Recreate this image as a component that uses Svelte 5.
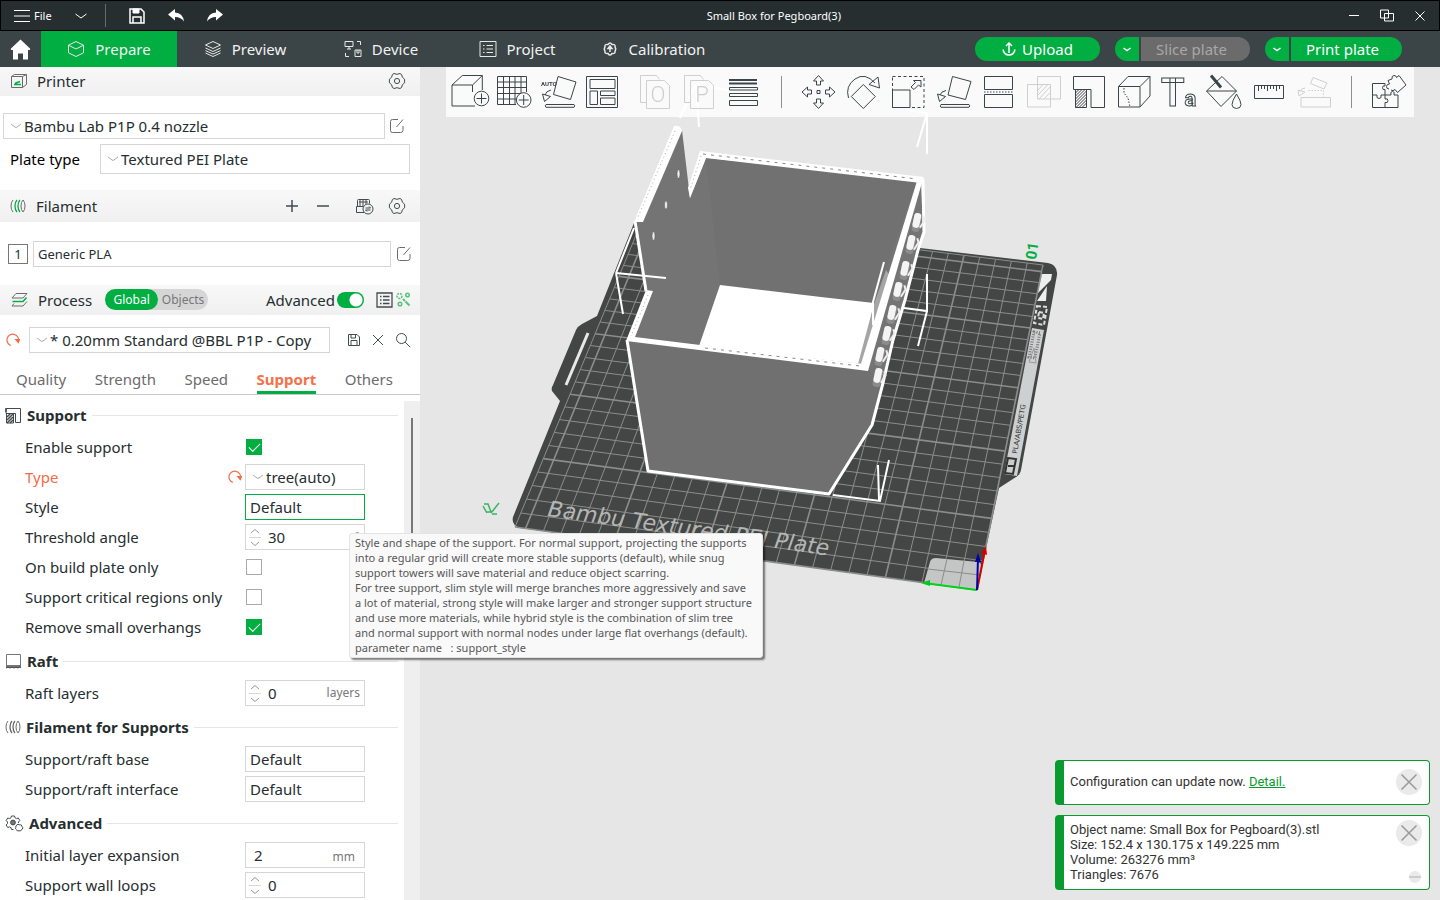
<script>
  const tabs = ['Prepare', 'Preview', 'Device', 'Project', 'Calibration'];
  let activeTab = $state('Prepare');

  const paramTabs = ['Quality', 'Strength', 'Speed', 'Support', 'Others'];
  let activeParam = $state('Support');

  const sections = [
    {
      title: 'Support',
      icon: 'support',
      rows: [
        { label: 'Enable support', kind: 'check', value: true },
        { label: 'Type', kind: 'combo', value: 'tree(auto)', changed: true },
        { label: 'Style', kind: 'plain', value: 'Default', focused: true },
        { label: 'Threshold angle', kind: 'spin', value: '30', unit: '°' },
        { label: 'On build plate only', kind: 'check', value: false },
        { label: 'Support critical regions only', kind: 'check', value: false },
        { label: 'Remove small overhangs', kind: 'check', value: true }
      ]
    },
    {
      title: 'Raft',
      icon: 'raft',
      rows: [{ label: 'Raft layers', kind: 'spin', value: '0', unit: 'layers' }]
    },
    {
      title: 'Filament for Supports',
      icon: 'filament',
      rows: [
        { label: 'Support/raft base', kind: 'plain', value: 'Default' },
        { label: 'Support/raft interface', kind: 'plain', value: 'Default' }
      ]
    },
    {
      title: 'Advanced',
      icon: 'gears',
      rows: [
        { label: 'Initial layer expansion', kind: 'text', value: '2', unit: 'mm' },
        { label: 'Support wall loops', kind: 'spin', value: '0' }
      ]
    }
  ];
  const idOf = (label) => label.toLowerCase().replace(/[^a-z]+/g, '-');

  const fileTools = ['Add', 'Add plate', 'Auto orient', 'Arrange'];
  const splitTools = ['To objects', 'To parts', 'Variable layer height'];
  const editTools = ['Move', 'Rotate', 'Scale', 'Lay on face', 'Cut', 'Boolean', 'Support painting', 'Seam painting', 'Text', 'Color painting', 'Measure', 'Assemble'];

  // Perspective projection of the 256 mm build plate onto the canvas.
  const plate = [[977, 590], [1043, 265], [644, 216], [515, 527]];
  const SIZE = 256;
  function project(x, y) {
    const [[x0, y0], [x1, y1], [x2, y2], [x3, y3]] = plate;
    const u = x / SIZE, v = y / SIZE;
    const dx1 = x1 - x2, dx2 = x3 - x2, sx = x0 - x1 + x2 - x3;
    const dy1 = y1 - y2, dy2 = y3 - y2, sy = y0 - y1 + y2 - y3;
    const det = dx1 * dy2 - dx2 * dy1;
    const g = (sx * dy2 - dx2 * sy) / det;
    const h = (dx1 * sy - sx * dy1) / det;
    const w = g * u + h * v + 1;
    return [
      ((x1 - x0 + g * x1) * u + (x3 - x0 + h * x3) * v + x0) / w,
      ((y1 - y0 + g * y1) * u + (y3 - y0 + h * y3) * v + y0) / w
    ].map((n) => n.toFixed(1));
  }
  const segment = (a, b) => `M${project(...a)}L${project(...b)}`;
  const both = (n) => segment([n, 0], [n, SIZE]) + segment([0, n], [SIZE, n]);
  const steps = Array.from({ length: 26 }, (_, i) => i * 10);
  const minorGrid = steps.filter((n) => n % 50).concat(SIZE).map(both).join('');
  const majorGrid = steps.filter((n) => n % 50 === 0).map(both).join('');

  const pegs = [[917, 222], [911, 244], [905, 270], [898, 291], [892, 314], [887, 335], [880, 356], [878, 377]];
</script>

{#snippet chevron()}
  <svg class="chev" width="12" height="12" viewBox="0 0 12 12"><path d="M1 4l4 3q1 .7 2 0l4-3" /></svg>
{/snippet}

{#snippet gear()}
  <svg class="ic" width="18" height="18" viewBox="0 0 18 18"><path d="M6 1.5q3 1.6 6 0l1.6 1q0 3 3 4.700v3.600q-3 1.700-3 4.700l-1.600 1q-3-1.600-6 0l-1.600-1q0-3-3-4.700V7.200q3-1.700 3-4.700z" /><circle cx="9" cy="9" r="2.600" /></svg>
{/snippet}

{#snippet edit()}
  <svg class="ic soft" width="16" height="16" viewBox="0 0 16 16"><path d="M9 1.500H3.500q-2 0-2 2v9q0 2 2 2h8q2.500 0 2.500-2V8M7.500 9L14 1.500" /></svg>
{/snippet}

{#snippet reset()}
  <svg class="reset" width="14" height="14" viewBox="0 0 14 14"><path d="M5 12.500A5.800 5.800 0 1 1 12.500 8" /><path d="M9.800 6.500h3.700l-1.200 3z" class="fill" /></svg>
{/snippet}

{#snippet spool(color)}
  <svg class="ic soft" width="16" height="14" viewBox="0 0 16 14"><path d="M3 1Q1 3 1 7t2 6M13 1q-2 2-2 6t2 6q2-2 2-6t-2-6" /><path d="M7 1Q5 3 5 7t2 6M10 1Q8 3 8 7t2 6" style:stroke={color} stroke-width="1.300" /></svg>
{/snippet}

{#snippet sectionIcon(name)}
  {#if name === 'support'}
    <svg class="ic" width="17" height="17" viewBox="0 0 17 17"><path d="M1 1.500h14.500v14h-5v-9H1zM1.500 6.500h7V16h-7z" /><path d="M2 10l3.500-3.500M2 13l6-6M2 16l6-6M5 16l3-3M1 5V1" stroke-width="1.500" /></svg>
  {:else if name === 'raft'}
    <svg class="ic" width="17" height="16" viewBox="0 0 17 16"><path d="M1.500 1.500h14v11h-14z" stroke="#777" /><path d="M1 13.500h15" stroke-width="3" stroke="#777" /><path d="M1 15q2-2 4 0 2-2 4 0 2-2 4 0 1.500-1.500 3-1" /></svg>
  {:else if name === 'filament'}
    {@render spool('#666')}
  {:else}
    <svg class="ic" width="19" height="17" viewBox="0 0 19 17"><circle cx="8" cy="7.500" r="2.400" fill="#777" /><path d="M6.500 1h3l.5 1.800 1.500.8 1.800-.6 1.500 2.500-1.300 1.500v1M6.500 1L6 2.800l-1.500.8-1.800-.6-1.500 2.500 1.300 1.500v1.500L1.200 10l1.500 2.500 1.800-.6 1.500.8.5 1.800h2" /><path d="M13 9l1 .8h1.500l1 .3.200 1.400 1.300 1-.7 1.500-1 1-.8 1-1.500-.3-1.500.300-1-1.300-1-1 .3-1.400.200-1.500 1-.8z" /></svg>
  {/if}
{/snippet}

{#snippet tabIcon(name)}
  <svg class="tabicon" width="18" height="18" viewBox="0 0 18 18">
    {#if name === 'Prepare'}
      <path d="M9 1.500l7.500 3.700v7.600L9 16.500l-7.500-3.700V5.200zM1.500 5.200L9 9l7.500-3.800" />
    {:else if name === 'Preview'}
      <path d="M9 1.500l7.500 3.500L9 8.500 1.500 5zM1.500 8L9 11.500 16.500 8M1.500 10.600L9 14l7.500-3.400M1.500 13L9 16.500l7.500-3.500" />
    {:else if name === 'Device'}
      <path d="M1 1.500h8v5H1zM5 6.500V9M3 9h4M13 1.500h3.500V5M1.500 13v3.500H5M11 10h6v6.500h-6zM13 10v3h2v-3" />
    {:else if name === 'Project'}
      <path d="M1 1.500h16v15H1zM4 5.500h1.500M4 9h1.500M4 12.500h1.500M7.500 5.500H14M7.500 9H14M7.500 12.500H14" />
    {:else}
      <path d="M7 4.500Q9 1.500 11 4.500q3.500-.5 3 2Q15.500 9 14 11.500q.5 2.500-3 2Q9 16.500 7 13.500q-3.500.5-3-2Q2.500 9 4 6.500q-.5-2.500 3-2z" stroke-width="1.500" /><path d="M9 6v6M9 6L7 8.500h4z" fill="#fff" stroke-width="1.500" />
    {/if}
  </svg>
{/snippet}

{#snippet tool(name)}
  <button class="tool" aria-label={name} title={name}>
    <svg width="40" height="40" viewBox="0 0 40 40" class:faded={['To objects', 'To parts', 'Boolean', 'Assemble'].includes(name)}>
      {#if name === 'Add'}
        <path d="M25 34H2V13h20.500v7M2 13L12.300 3.500h20L22.500 13M32.300 3.500V18" /><circle cx="31.500" cy="26.500" r="7.300" /><path d="M31.500 21.500v10M26.500 26.500h10" />
      {:else if name === 'Add plate'}
        <path d="M22 32.500H3.500v-28h29V20M9.500 4.500v28M15.500 4.500v28M21 4.500v28M27 4.500V21M3.500 10h29M3.500 15.500h29M3.500 21.500H27M3.500 27H22" /><circle cx="29.700" cy="28" r="7.300" /><path d="M29.700 23v10M24.700 28h10" />
      {:else if name === 'Auto orient'}
        <text x="3" y="14" class="auto">AUTO</text><path d="M20 4.500L38 10l-5.500 17.500L15.500 22.500zM13 18q-5 1-6 5M4.500 22l2 7.500 6-5zM8 32.500h28q1.500 1.400 0 2.800H8q-1.500-1.400 0-2.800z" />
      {:else if name === 'Arrange'}
        <path d="M4.500 4.500h31v31h-31zM8 7.500h25v9H8zM8 19h7.500v13.500H8zM18.500 19H33v4.500H18.500zM18.500 26H33v6.500H18.500z" />
      {:else if name === 'To objects' || name === 'To parts'}
        <path d="M11 30.500H5.500v-27h16l3 4M11.500 8.500h18l5 5v23h-23z" /><text x="23" y="30" class="letter">{name === 'To objects' ? 'O' : 'P'}</text>
      {:else if name === 'Variable layer height'}
        <path d="M6 8h28M6 11.500h28" stroke-width="2" /><path d="M6.500 15.500h28v2.500h-28zM6.500 21.500h28v3h-28zM6.500 28.500h28v5h-28z" />
      {:else if name === 'Move'}
        <path d="M20.500 3.500l5 5.500h-3v4h-4V9h-3zM20.500 36.500l5-5.500h-3v-4h-4v4h-3zM4 20l5.500-5v3h4v4h-4v3zM37 20l-5.500-5v3h-4v4h4v3zM19 18.500h3v3h-3z" />
      {:else if name === 'Rotate'}
        <path d="M20.300 12.500l12 12-12 12-12-12zM5.500 26Q2 14 12 7t20 4M35 5l1.500 11L26 12.500z" />
      {:else if name === 'Scale'}
        <path d="M4.500 4.500h31.500v31H4.500z" stroke-dasharray="3 2.500" /><path d="M4.500 18H22v17.500H4.500zM23 15l4.500-4.500-2-2H33V15l-2.500-2L26 17.500z" />
      {:else if name === 'Lay on face'}
        <path d="M19.500 4.500L38 9.500l-5.500 18-17.500-4.500zM13 18.500q-5 1-6 4.500M4.500 22l2 7.500 6-5zM8 32.500h28q1.500 1.400 0 2.800H8q-1.500-1.400 0-2.800z" />
      {:else if name === 'Cut'}
        <path d="M6.500 4.500h28v13h-28zM6.500 22.500h28v13h-28z" /><path d="M6 20h29" stroke-dasharray="1.500 1.500" />
      {:else if name === 'Boolean'}
        <path d="M4.500 12.500h23v22.500h-23zM14.500 4.500h23v22.500h-23zM15 18l5-5.500M15 23l10-10.500M16 27l11-12M21 27l6-6.500" />
      {:else if name === 'Support painting'}
        <path d="M5.500 4.500h31v31H23V17.500H5.500zM7.500 17.500h11v18h-11zM7.500 21l3.500-3.500M7.500 24l6.500-6.500M7.500 27l9.500-9.500M7.500 30l11-11M7.500 33l11-11M8 35.500l10.500-10.500M11 35.500l7.500-7.500M14 35.500l4.500-4.500" />
      {:else if name === 'Seam painting'}
        <path d="M5.500 14.500H27V35H5.500zM5.500 14.500L15 4.500h22L27 14.500M37 4.500V24L27 35" /><path d="M11 16v5l4 5 2 9" stroke-dasharray="1.500 1.500" />
      {:else if name === 'Text'}
        <text x="3" y="34" class="big">T<tspan class="small">a</tspan></text>
      {:else if name === 'Color painting'}
        <path d="M3.500 19L19 4.500 33.500 19 18 34.500zM3.500 19h30M33.500 22q-9 14 0 14.500 9-.5 0-14.500z" /><path d="M8 3.500l10 12" stroke-width="3" />
      {:else if name === 'Measure'}
        <path d="M6.500 13.500h29v13h-29z" /><path d="M10.500 14v5M13.500 14v3M16.500 14v3M19.500 14v5M22.500 14v3M25.500 14v3M28.500 14v5M31.500 14v3" />
      {:else if name === 'Assemble'}
        <path d="M8 25.500h29.500v9.500H8zM20 5.500l14 5.500-3 6-13.500-5.500zM12 16q-4 .5-5 3.500M5 18l1 6 6-4z" /><path d="M15.500 18.500h15v7" stroke-dasharray="1.500 1.500" />
      {:else}
        <path d="M4.500 23V11.500H17V14q-2.500-1-2.500 1.700t2.500 1.800V23h-4q1 3.500-2 3.500T9 23zM4.500 23v12.500H30V23h-4q1-3.500-1.500-3.500T23 23h-6v4q3-1 3 1.700T17 30.500v5M21 17q-2.500 0-2.500-2.500T21.500 12L20 8.500l4-1.500q-.5-3.500 2-3.500t2.500 2l2.500-2 7 9.500-8.500 7.500-2.500-3q-2 2-4 .5" />
      {/if}
    </svg>
  </button>
{/snippet}

<div class="app">
  <header class="titlebar">
    <div class="menu">
      <button class="filebtn"><svg width="16" height="14" viewBox="0 0 16 14"><path d="M0 1.500h16M0 7h16M0 12.500h16" /></svg>File</button>
      <button class="bare" aria-label="More menus"><svg width="12" height="12" viewBox="0 0 12 12"><path d="M.5 4L6 8l5.500-4" /></svg></button>
      <span class="rule"></span>
      <button class="bare" aria-label="Save"><svg width="16" height="16" viewBox="0 0 16 16"><path d="M1 1h11l3 3v11H1zM4 15V9h8v6" stroke-width="1.500" /><path d="M4 1h6v4H4z" fill="#fff" /></svg></button>
      <button class="bare" aria-label="Undo"><svg width="16" height="16" viewBox="0 0 16 16"><path d="M0 6.500L7 1v3.500q8 .5 9 9Q13 9 7 9v3.500z" class="solid" /></svg></button>
      <button class="bare" aria-label="Redo"><svg width="16" height="16" viewBox="0 0 16 16"><path d="M16 6.500L9 1v3.500Q1 5 0 13.500 3 9 9 9v3.500z" class="solid" /></svg></button>
    </div>
    <h1>Small Box for Pegboard(3)</h1>
    <div class="window">
      <button class="bare" aria-label="Minimize"><svg width="16" height="16" viewBox="0 0 16 16"><path d="M3 7.500h10" /></svg></button>
      <button class="bare" aria-label="Restore"><svg width="16" height="16" viewBox="0 0 16 16"><path d="M1.500 2h8v8h-8zM5.500 5.500h9V13h-9z" /></svg></button>
      <button class="bare" aria-label="Close"><svg width="16" height="16" viewBox="0 0 16 16"><path d="M3.500 3.500l9 9M12.500 3.500l-9 9" /></svg></button>
    </div>
  </header>

  <nav class="tabs">
    <button class="home" aria-label="Home"><svg width="21" height="21" viewBox="0 0 21 21"><path d="M10.500.5L1 9.500q-.8 1.500.8 1.500H3v9.500h5v-6h5v6h5V11h1.200q1.600 0 .8-1.500z" fill="#fff" /></svg></button>
    {#each tabs as name}
      <button class="tab" class:active={name === activeTab} onclick={() => (activeTab = name)}>{@render tabIcon(name)}{name}</button>
    {/each}
    <div class="actions">
      <button class="pill upload"><svg width="14" height="14" viewBox="0 0 14 14"><path d="M7 11V1.500M4 4l3-3 3 3M1 7.500Q2 13 7 13t6-5.500" /></svg>Upload</button>
      <div class="split">
        <button class="drop" aria-label="Slice options"><svg width="10" height="10" viewBox="0 0 10 10"><path d="M1.500 4L5 6.500 8.500 4" /></svg></button>
        <button class="pill off">Slice plate</button>
      </div>
      <div class="split">
        <button class="drop" aria-label="Print options"><svg width="10" height="10" viewBox="0 0 10 10"><path d="M1.500 4L5 6.500 8.500 4" /></svg></button>
        <button class="pill">Print plate</button>
      </div>
    </div>
  </nav>

  <div class="body">
    <aside>
      <div class="head printer">
        <svg class="ic soft" width="18" height="16" viewBox="0 0 18 16"><path d="M1.500 3.500h11v11h-11zM1.500 3.500l3-2h12v10l-4 3M12.500 3.500l4-2" /><path d="M4 11.500h7M5 10.500q2-1 5-2" stroke="#00ae42" stroke-width="1.500" /></svg>
        <h2>Printer</h2>
        <button class="bare push" aria-label="Printer settings">{@render gear()}</button>
      </div>
      <div class="line printerline">
        <label class="combo">{@render chevron()}<select aria-label="Printer preset"><option>Bambu Lab P1P 0.4 nozzle</option></select></label>
        <button class="bare" aria-label="Edit printer">{@render edit()}</button>
      </div>
      <div class="line plateline">
        <label for="plate-type">Plate type</label>
        <div class="combo tall">{@render chevron()}<select id="plate-type"><option>Textured PEI Plate</option></select></div>
      </div>

      <div class="head">
        {@render spool('#00ae42')}
        <h2>Filament</h2>
        <div class="headtools push">
          <button class="bare" aria-label="Add filament"><svg class="ic" width="14" height="14" viewBox="0 0 14 14"><path d="M1 7h12M7 1v12" stroke-width="1.500" /></svg></button>
          <button class="bare minus" aria-label="Remove filament"><svg class="ic" width="14" height="14" viewBox="0 0 14 14"><path d="M1 7h12" stroke-width="1.500" /></svg></button>
          <button class="bare" aria-label="Sync filaments"><svg class="ic" width="19" height="17" viewBox="0 0 19 17"><path d="M9 14.500H1.500v-6h7M2.500 8.500v-6q0-1 1-1h10q1 0 1 1v3M4 4h9M5 2v6M8 2v6M11 2v4" /><circle cx="13" cy="11" r="5" /><path d="M10.500 10h5l-1.500-1.500M15.500 12h-5l1.500 1.500" /></svg></button>
          <button class="bare" aria-label="Filament settings">{@render gear()}</button>
        </div>
      </div>
      <div class="line filamentline">
        <span class="slot">1</span>
        <div class="combo compact"><select aria-label="Filament 1"><option>Generic PLA</option></select></div>
        <button class="bare" aria-label="Edit filament">{@render edit()}</button>
      </div>

      <div class="head process">
        <svg class="ic soft" width="17" height="16" viewBox="0 0 17 16"><path d="M5 1.500h11l-4 4.500H1zM16 9.500l-4 4.500H1l2-2.500" /><path d="M1.500 9.500H12l3.500-4" stroke="#00ae42" stroke-width="1.500" /></svg>
        <h2>Process</h2>
        <div class="switch"><button class="on">Global</button><button>Objects</button></div>
        <label class="adv push">Advanced<input type="checkbox" role="switch" checked /></label>
        <button class="bare" aria-label="Parameter list"><svg class="ic" width="17" height="16" viewBox="0 0 17 16"><path d="M1 1h15v14H1zM4 4.500h1.500M4 8h1.500M4 11.500h1.500M7 4.500h6.500M7 8h6.500M7 11.500h6.500" stroke-width="1.300" /></svg></button>
        <button class="bare" aria-label="Compare presets"><svg width="15" height="15" viewBox="0 0 15 15" fill="none" stroke="#56c47e" stroke-width="1.500"><circle cx="3.500" cy="4" r="2.500" stroke-dasharray="2 1" /><circle cx="11.500" cy="3" r="1.800" /><circle cx="4" cy="12" r="1.800" /><path d="M7 7l2 2M9.500 9.500l4 4" stroke-width="2" /></svg></button>
      </div>
      <div class="line presetline">
        {@render reset()}
        <label class="combo">{@render chevron()}<select aria-label="Process preset"><option>* 0.20mm Standard @BBL P1P - Copy</option></select></label>
        <div class="presettools">
          <button class="bare" aria-label="Save preset"><svg class="ic" width="14" height="14" viewBox="0 0 14 14"><path d="M1.500 1.500h8.500l2.500 2.500v8.500h-11zM4 12.500v-5h6v5M4 1.500V5h4.500V1.500" /></svg></button>
          <button class="bare" aria-label="Delete preset"><svg class="ic" width="14" height="14" viewBox="0 0 14 14"><path d="M2 2l10 10M12 2L2 12" /></svg></button>
          <button class="bare" aria-label="Search"><svg class="ic" width="16" height="16" viewBox="0 0 16 16"><circle cx="6.500" cy="6.500" r="5" /><path d="M10.200 10.200l5 5" /></svg></button>
        </div>
      </div>

      <div class="params" role="tablist">
        {#each paramTabs as name}
          <button role="tab" aria-selected={name === activeParam} class:active={name === activeParam} onclick={() => (activeParam = name)}>{name}</button>
        {/each}
      </div>

      <div class="scroll">
        <div class="settings">
          {#each sections as section}
            <section>
              <h3>{@render sectionIcon(section.icon)}<span>{section.title}</span></h3>
              {#each section.rows as row}
                <div class="row" class:changed={row.changed}>
                  <label for={idOf(row.label)}>{row.label}</label>
                  <span class="mark">{#if row.changed}{@render reset()}{/if}</span>
                  {#if row.kind === 'check'}
                    <input type="checkbox" id={idOf(row.label)} checked={row.value} />
                  {:else if row.kind === 'combo' || row.kind === 'plain'}
                    <div class="combo field" class:focused={row.focused}>
                      {#if row.kind === 'combo'}{@render chevron()}{/if}
                      <select id={idOf(row.label)}><option>{row.value}</option></select>
                    </div>
                  {:else}
                    <div class="num field">
                      {#if row.kind === 'spin'}
                        <svg width="14" height="22" viewBox="0 0 14 22"><path d="M3 7L7 3.500 11 7M3 16l4 3.500L11 16" /><path d="M1 11.500h12" class="pale" /></svg>
                      {/if}
                      <input type="text" id={idOf(row.label)} value={row.value} />
                      {#if row.unit}<span class="unit" class:wide={row.kind === 'text'}>{row.unit}</span>{/if}
                    </div>
                  {/if}
                </div>
              {/each}
            </section>
          {/each}
        </div>
        <div class="bar"><div class="thumb"></div></div>
      </div>
    </aside>

    <main>
      <svg class="scene" viewBox="420 67 1020 833" preserveAspectRatio="xMidYMid slice">
        <path d="M513 517L560 401 552 391Q551 388 553 385L576 330Q578 326 582 324L597 316 636 218 920 248 1048 263Q1058 265 1057 275L1021 470Q1020 475 1016 477L999 488 977 590 520 528Q511 525 513 517z" fill="#434644" />
        <path d={minorGrid} stroke="#8a8d8b" stroke-width="1" fill="none" />
        <path d={majorGrid} stroke="#8a8d8b" stroke-width="1.600" fill="none" />
        <path d="M930 562Q931 558 936 558L978 562Q982 563 981 567L977 590 924 583z" fill="#c4c6c6" />
        <path d="M947 559L941 585M964 561L959 587M928 569L980 575" fill="none" stroke="#8a8d8b" />
        <path d="M588 333L566 385" stroke="#e8e8e8" stroke-width="3" />
        <path d="M1043 267l9 7-4 26-9 2z" fill="#434644" />
        <path d="M1042 274l10 0-1 6-13 13zM1047 286l-1 15-9 0z" fill="#eee" />
        <path d="M1037 306l10 1-3 18-10-2zM1039 312l5 1-1 6-5-1z" fill="none" stroke="#ddd" stroke-width="2" stroke-dasharray="4 2" />
        <path d="M1032 328l12 2-27 146-13-2z" fill="#ccd0d0" />
        <text class="plate tiny" transform="translate(1017 454) rotate(-80)">PLA/ABS/PETG</text>
        <path d="M1034 332l6 1-5 25-6-1z" fill="none" stroke="#777" stroke-width="3" stroke-dasharray="1 1.500" />
        <path d="M1034 348l-5 14 7 1z" fill="none" stroke="#999" />
        <path d="M1008 458l8 1-3 15-8-1zM1008 466h7" fill="#ccc" stroke="#333" stroke-width="2" />
        <text class="plate name" transform="translate(547 516) rotate(8)">Bambu Textured PEI Plate</text>
        <text class="number" transform="translate(1036 260) rotate(-82)">01</text>
        <path d="M484 504l4 0 3 8-5 0M491 513l8-10M487 513l-4-7M492 514l5 0" fill="none" stroke="#39b463" stroke-width="1.500" />

        <path d="M616 273L634 228M616 273L623 314" class="wire" />
        <path d="M682 130L690 198 706 158 917 181 921 181 923 232 905 300 893 340 883 383 872 425 829 494 648 471 628 341 646 291 636 222z" fill="#747474" />
        <path d="M706 158L917 181 873 303 720 285z" fill="#717171" />
        <path d="M720 285L821 297 874 303 862 364 699 346z" fill="#fff" />
        <path d="M886 270L890 276 864 368 858 364 874 304z" fill="#a5a5a5" />
        <path d="M628 341L868 370 883 383 872 425 829 494 648 471z" fill="#707070" />
        <path d="M674 126Q681 125 682 131L643 222 634 222z" fill="#fff" />
        <path d="M700 151L924 177 921 183 706 158 690 198 688 188z" fill="#fff" />
        <path d="M917 181L923 179 868 371 860 367z" fill="#fff" />
        <path d="M646 290L653 291 635 337 700 345 864 364 868 371 626 341z" fill="#fff" />
        <path d="M635 221L646 291M627 340L648 471 829 494 872 425 883 383 893 340 905 300 918 250 924 232 923 179" fill="none" stroke="#fff" stroke-width="3" stroke-linejoin="round" />
        <path d="M675 131L638 217M701 156L690 190M648 295L631 336" fill="none" stroke="#aaa" stroke-dasharray="1 3" />
        <path d="M703 154L917 179M705 348L860 366" fill="none" stroke="#888" stroke-dasharray="3 5" />
        {#each pegs as [x, y]}
          <g transform="translate({x} {y}) rotate(12)"><rect x="-4" y="-9" width="8" height="19" rx="3" fill="#8c8c8c" /><rect x="-4" y="-9" width="7" height="15" rx="3" fill="#f4f4f4" /><path d="M5-7l2 4-3 8" fill="none" stroke="#eee" stroke-width="2" /></g>
        {/each}
        <g fill="#eee" stroke="#555" stroke-width=".5"><ellipse cx="678.500" cy="174" rx="1.500" ry="4" /><ellipse cx="666" cy="205" rx="1.500" ry="4" /><ellipse cx="653.500" cy="236" rx="1.500" ry="4" /></g>
        <path d="M616 273L666 278M884 262L873 302 873 325M927 274V311L904 308M927 311L918 346M833 495L880 501 889 460M878 465L879 500M908 110L927 113V154M927 113L917 147M728 90L695 85 680 118M696 85L699 127" class="wire" />

        <path d="M977 590L924 583" stroke="#00d21e" stroke-width="2" /><path d="M921 583l9-3v6z" fill="#00c81c" />
        <path d="M977 590L985 550" stroke="#d40000" stroke-width="2" /><path d="M986 546l-5 7 6 2z" fill="#d40000" />
        <path d="M977 590L978 558" stroke="#0000a8" stroke-width="2" /><path d="M978 553l-3 9h6z" fill="#0000a8" />
      </svg>

      <div class="toolbar">
        <div class="group">{#each fileTools as name}{@render tool(name)}{/each}</div>
        <div class="group second">{#each splitTools as name}{@render tool(name)}{/each}</div>
        <span class="sep"></span>
        <div class="group edits">{#each editTools as name}{@render tool(name)}{/each}</div>
        <span class="sep"></span>
        <div class="group">{@render tool('Assembly view')}</div>
      </div>

      <div class="notes">
        <div class="note">
          <p>Configuration can update now. <a href="#detail">Detail.</a></p>
          <button class="close" aria-label="Dismiss update"><svg width="18" height="18" viewBox="0 0 18 18"><path d="M1.500 1.500l15 15M16.500 1.500l-15 15" /></svg></button>
        </div>
        <div class="note info">
          <p>Object name: Small Box for Pegboard(3).stl<br />Size: 152.4 x 130.175 x 149.225 mm<br />Volume: 263276 mm³<br />Triangles: 7676</p>
          <div class="side">
            <button class="close" aria-label="Dismiss object details"><svg width="18" height="18" viewBox="0 0 18 18"><path d="M1.500 1.500l15 15M16.500 1.500l-15 15" /></svg></button>
            <button class="mini" aria-label="Collapse"></button>
          </div>
        </div>
      </div>
    </main>
  </div>

  <div class="tooltip" role="tooltip">Style and shape of the support. For normal support, projecting the supports<br />into a regular grid will create more stable supports (default), while snug<br />support towers will save material and reduce object scarring.<br />For tree support, slim style will merge branches more aggressively and save<br />a lot of material, strong style will make larger and stronger support structure<br />and use more materials, while hybrid style is the combination of slim tree<br />and normal support with normal nodes under large flat overhangs (default).<br />parameter name&nbsp;&nbsp; : support_style</div>
</div>

<style>
  :global(body) { margin: 0; }
  .app { --green: #00ae42; position: relative; display: flex; flex-direction: column; height: 100vh; overflow: hidden; font: 15px/20px "Noto Sans", sans-serif; color: #262e30; background: #fff; }
  .app * { box-sizing: border-box; }
  button, input, select { font: inherit; color: inherit; }
  button { padding: 0; border: 0; background: none; display: flex; align-items: center; justify-content: center; white-space: nowrap; }
  h1, h2, h3, p { margin: 0; font-weight: 400; }
  h2 { font-size: 15px; }
  svg { flex: none; display: block; }
  .push { margin-left: auto; }
  .ic { fill: none; stroke: #444b4d; }
  .ic.soft { stroke: #6b6b6b; }
  .reset { fill: none; stroke: #f56b45; stroke-width: 1.2; }
  .reset .fill { fill: #f56b45; }

  .titlebar { display: flex; align-items: center; flex: none; height: 31px; border: 1px solid #000; background: #262e30; color: #fff; font-size: 11px; line-height: 16px; }
  .titlebar svg { fill: none; stroke: #fff; }
  .titlebar .solid { fill: #fff; stroke: none; }
  .menu { display: flex; align-items: center; gap: 23px; padding-left: 13px; }
  .filebtn { gap: 4px; }
  .rule { width: 1px; height: 23px; background: #666c6e; margin-left: -5px; }
  h1 { flex: 1; text-align: center; font-size: 11px; }
  .window { display: flex; gap: 17px; padding: 0 11px 0 21px; }

  .tabs { display: flex; flex: none; height: 36px; background: #3b4446; color: #fff; }
  .home { width: 41px; }
  .tab { width: 136px; gap: 10px; color: #f2f2f2; }
  .tab.active { background: var(--green); }
  .tabicon { fill: none; stroke: #e8e8e8; }
  .actions { display: flex; align-items: center; gap: 15px; margin-left: auto; padding-right: 38px; }
  .actions svg { fill: none; stroke: #fff; stroke-width: 1.5; }
  .split { display: flex; gap: 2px; }
  .pill, .drop { height: 24px; background: var(--green); }
  .pill { width: 111px; padding-right: 8px; border-radius: 0 12px 12px 0; }
  .upload { gap: 6px; width: 125px; padding: 0; border-radius: 12px; }
  .drop { width: 24px; border-radius: 12px 0 0 12px; }
  .pill.off { width: 109px; background: #6b6b6b; color: #a8a8a8; }

  .body { display: flex; flex: 1; min-height: 0; }
  aside { display: flex; flex-direction: column; flex: none; width: 420px; background: #fff; }
  .head { display: flex; align-items: center; gap: 10px; flex: none; height: 32px; padding: 0 14px 0 10px; background: linear-gradient(#f8f8f8, #f0f0f0); }
  .head.printer { height: 29px; padding-bottom: 2px; gap: 9px; }
  .head.process { height: 30px; gap: 10px; padding: 0 9px 1px 11px; }
  .headtools { display: flex; align-items: center; gap: 14px; }
  .headtools .minus { margin: 0 11px 0 3px; }
  .line { display: flex; align-items: center; flex: none; }
  .printerline { padding: 17px 15px 5px 3px; gap: 4px; }
  .plateline { padding: 0 10px 16px; gap: 20px; color: #000; }
  .plateline label { flex: 1; white-space: nowrap; }
  .plateline .combo { flex: none; width: 310px; color: #262e30; }
  .filamentline { padding: 19px 8px 18px; gap: 5px; }
  .slot { display: flex; align-items: center; justify-content: center; width: 20px; height: 20px; border: 1px solid #777; font-size: 13px; }
  .presetline { padding: 12px 9px 6px 6px; gap: 9px; }
  .presettools { display: flex; align-items: center; gap: 10px; padding-left: 8px; }
  .combo { position: relative; display: flex; align-items: center; flex: 1; height: 26px; padding-left: 6px; border: 1px solid #d6d6d6; background: #fff; }
  .combo.tall { height: 30px; }
  .combo.compact { padding-left: 4px; font-size: 13px; }
  .combo select { flex: 1; min-width: 0; padding: 0 0 0 2px; border: 0; outline: 0; background: none; appearance: none; }
  .combo.compact select, .field select { padding: 0; }
  .chev { fill: none; stroke: #aaa; }
  .switch { display: flex; height: 21px; margin-left: 3px; border-radius: 11px; background: #d6d6d6; font-size: 12px; }
  .switch button { width: 50px; color: #777; }
  .switch .on { width: 53px; border-radius: 11px; background: var(--green); color: #fff; }
  .adv { display: flex; align-items: center; gap: 2px; }
  .adv input { appearance: none; width: 27px; height: 16px; margin: 0 2px 0 0; border-radius: 8px; background: radial-gradient(circle at 19px 8px, #fff 6px, var(--green) 7px); }
  .process .bare:last-child { margin-left: -7px; }

  .params { display: flex; flex: none; justify-content: space-between; height: 36px; padding: 0 27px 0 16px; border-bottom: 1px solid #c8c8c8; color: #6b6b6b; }
  .params button { height: 35px; border-bottom: 3px solid transparent; padding-top: 8px; }
  .params .active { color: #f4714a; font-weight: 700; border-bottom-color: var(--green); }
  .scroll { display: flex; flex: 1; min-height: 0; }
  .settings { flex: 1; overflow: hidden; padding-top: 1px; }
  .bar { width: 16px; margin-top: 6px; padding: 17px 0 0 7px; background: #efefef; }
  .thumb { width: 2px; height: 220px; background: #777; }
  h3 { display: flex; align-items: center; gap: 5px; height: 36px; padding: 2px 6px 0 5px; font-size: 15px; font-weight: 700; }
  h3::after { content: ""; flex: 1; height: 1px; background: #e6e6e6; }
  .row { display: flex; align-items: center; height: 30px; padding-left: 25px; }
  .row > label { width: 203px; white-space: nowrap; }
  .changed > label { color: #f56b45; }
  .mark { width: 17px; }
  .field { flex: none; width: 120px; padding-left: 4px; }
  .field.focused { border-color: var(--green); }
  .field .chev { margin-left: 2px; margin-right: 2px; }
  .row > input { appearance: none; width: 16px; height: 16px; margin: 0 1px; border: 1px solid #aaa; background: #fff; display: flex; justify-content: center; }
  .row > input:checked { border-color: var(--green); background: var(--green); }
  .row > input:checked::after { content: ""; width: 10px; height: 5px; margin-top: 3px; border: solid #fff; border-width: 0 0 1px 1px; transform: rotate(-45deg); }
  .num { display: flex; align-items: center; height: 26px; border: 1px solid #d6d6d6; padding: 0 4px 0 2px; }
  .num svg { fill: none; stroke: #999; }
  .num .pale { stroke: #d6d6d6; }
  .num input { flex: 1; min-width: 0; width: 20px; border: 0; outline: 0; padding: 0 0 0 6px; background: none; }
  .unit { color: #777; font-size: 12px; }
  .unit.wide { padding: 3px 5px 0 0; }

  main { position: relative; flex: 1; min-width: 0; background: #e6e6e6; overflow: hidden; }
  .scene { width: 100%; height: 100%; }
  .wire { fill: none; stroke: #fff; stroke-width: 2; }
  .plate { fill: #b4b6b5; font-family: "DejaVu Sans", sans-serif; }
  .name { font-size: 22px; font-style: italic; }
  .tiny { fill: #333; font-size: 7px; }
  .number { fill: var(--green); font: bold 15px Roboto, sans-serif; }
  .toolbar { position: absolute; top: 0; left: 26px; right: 26px; display: flex; align-items: center; height: 50px; padding-left: 4px; background: rgba(255, 255, 255, 0.8); }
  .group { display: flex; gap: 4px; }
  .second { margin-left: 13px; }
  .edits { gap: 5px; }
  .sep { width: 1px; height: 32px; margin: 0 16px 0 18px; background: #8a8f90; }
  .tool { width: 40px; height: 40px; }
  .tool svg { overflow: visible; fill: none; stroke: #3b4446; will-change: opacity; }
  .tool .faded { stroke: #cfcfcf; }
  .tool text { font-family: Roboto, sans-serif; }
  .tool .auto { font-size: 6px; font-weight: 700; fill: #3b4446; stroke: none; }
  .tool .letter { font-size: 22px; font-weight: 300; text-anchor: middle; fill: #cfcfcf; stroke: none; }
  .tool .big { font-size: 38px; font-weight: 700; }
  .tool .small { font-size: 22px; }

  .notes { position: absolute; right: 10px; bottom: 10px; width: 375px; display: flex; flex-direction: column; gap: 10px; font: 13px/15px Roboto, sans-serif; }
  .note { display: flex; align-items: center; justify-content: space-between; height: 45px; padding: 0 7px 2px 6px; border: 1px solid #0a9b30; border-left-width: 9px; border-radius: 4px; background: #fff; color: #333; }
  .note a { color: #0a9b30; }
  .info { height: 75px; padding-top: 4px; padding-bottom: 6px; }
  .close { width: 26px; height: 26px; border-radius: 50%; background: #eaeaea; }
  .close svg { stroke: #999; stroke-width: 1.500; }
  .side { display: flex; flex-direction: column; align-items: center; justify-content: space-between; height: 100%; }
  .mini { width: 12px; height: 12px; margin: 0 0 0 12px; border-radius: 50%; background: linear-gradient(#eaeaea 5px, #ccc 5px, #ccc 7px, #eaeaea 7px); }
  .tooltip { position: absolute; left: 349px; top: 533px; width: 414px; padding: 1px 5px 2px; border: 1px solid #e4e4e4; border-radius: 3px; background: #f9f9f9; box-shadow: 2px 2px 2px rgba(0, 0, 0, 0.5); color: #575757; font-size: 11px; line-height: 15px; white-space: nowrap; }
</style>
